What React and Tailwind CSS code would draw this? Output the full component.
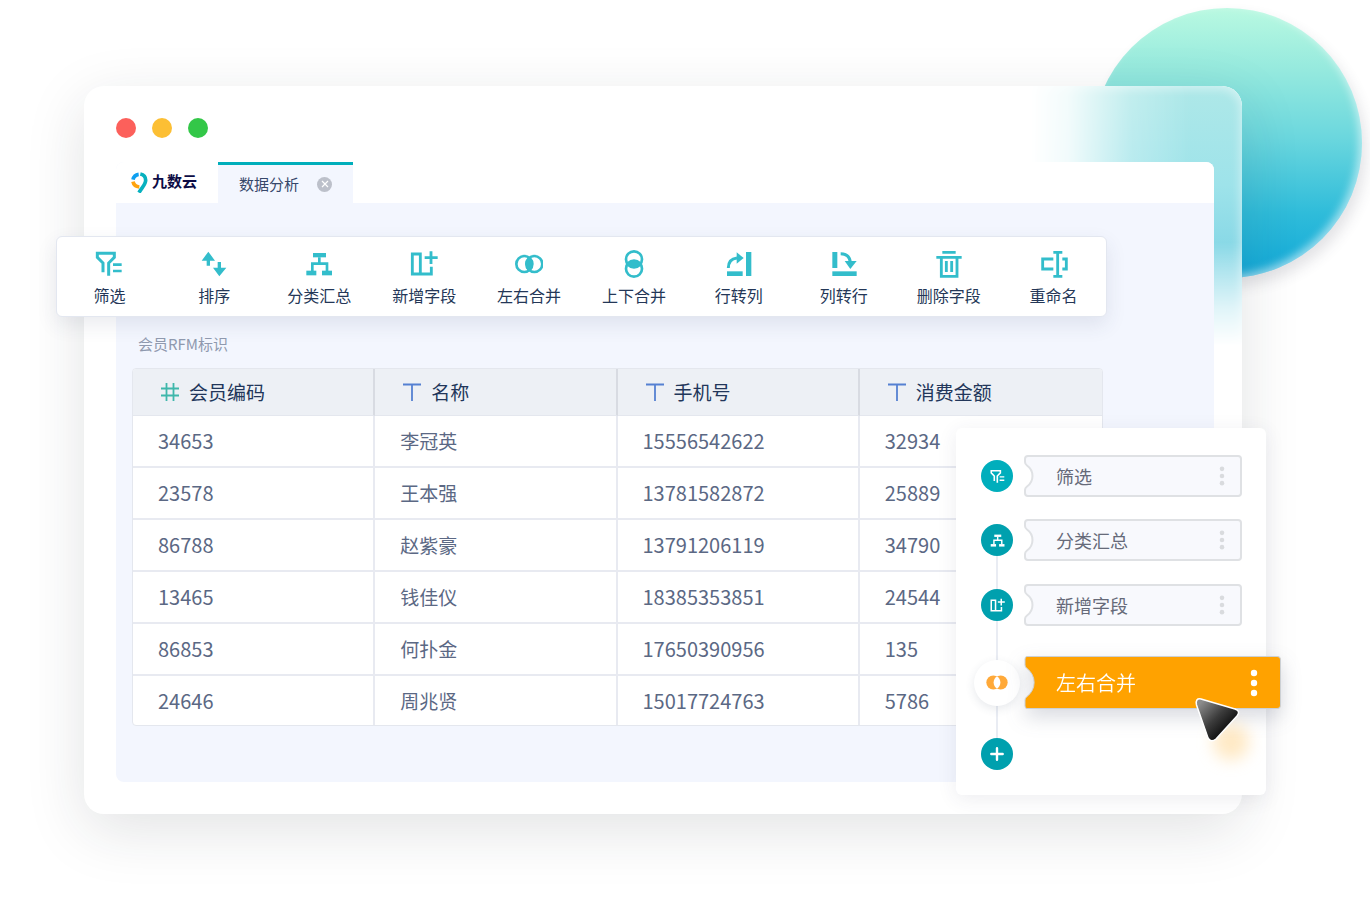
const ICONS = {
  filter: (
    <g fill="none" stroke="currentColor" strokeWidth="9">
      <path d="M24 67V39L7 22V10H58V22L41 39V77" />
      <path d="M54 44H80M54 63H80" strokeWidth="8" />
    </g>
  ),
  sort: (
    <g fill="currentColor">
      <path d="M25 5 45 32H30V47H20V32H5Z" />
      <path d="M53 36H63V53H79L58 79 39 53H53Z" />
    </g>
  ),
  group: (
    <g fill="currentColor">
      <rect x="24" y="9" width="39" height="13" />
      <rect x="4" y="62" width="30" height="14" />
      <rect x="51" y="62" width="30" height="14" />
      <path d="M43 22V40M22 63V41H66V63" fill="none" stroke="currentColor" strokeWidth="8" />
    </g>
  ),
  addField: (
    <g fill="none" stroke="currentColor" strokeWidth="8.5">
      <path d="M31 72V12H7V72H64V50" />
      <path d="M63 4V42M44 23H83" />
    </g>
  ),
  mergeX: (
    <g fill="none" stroke="currentColor" strokeWidth="8">
      <circle cx="28" cy="42" r="24" />
      <circle cx="58" cy="42" r="24" />
      <path d="M43 20A27 27 0 0 1 43 64A27 27 0 0 1 43 20Z" fill="currentColor" stroke="none" />
    </g>
  ),
  mergeY: (
    <g fill="none" stroke="currentColor" strokeWidth="8">
      <circle cx="42" cy="28" r="24" />
      <circle cx="42" cy="56" r="24" />
      <path d="M20 42A27 27 0 0 1 64 42A27 27 0 0 1 20 42Z" fill="currentColor" stroke="none" />
    </g>
  ),
  rowToCol: (
    <g fill="currentColor">
      <rect x="6" y="64" width="47" height="14" />
      <rect x="63" y="6" width="16" height="72" />
      <path d="M35 7 56 24 35 41Z" />
      <path d="M10 54C10 38 18 26 36 24" fill="none" stroke="currentColor" strokeWidth="9" />
    </g>
  ),
  colToRow: (
    <g fill="currentColor">
      <rect x="7" y="6" width="15" height="48" />
      <rect x="7" y="64" width="73" height="14" />
      <path d="M44 33H80L61 57Z" />
      <path d="M32 11C50 11 59 20 61 36" fill="none" stroke="currentColor" strokeWidth="9" />
    </g>
  ),
  remove: (
    <g fill="none" stroke="currentColor" strokeWidth="8.5">
      <path d="M22 7H62M4 22H80" />
      <path d="M19 22V79H66V22" />
      <path d="M34 33V66M50 33V66" />
    </g>
  ),
  rename: (
    <g fill="none" stroke="currentColor" strokeWidth="8.500">
      <path d="M40 7H67M40 79H67M53 7V79" />
      <path d="M40 27H8V57H40M67 27H79V57H67" />
    </g>
  ),
};

const TOOLS = [
  { icon: 'filter', label: '筛选' },
  { icon: 'sort', label: '排序' },
  { icon: 'group', label: '分类汇总' },
  { icon: 'addField', label: '新增字段' },
  { icon: 'mergeX', label: '左右合并' },
  { icon: 'mergeY', label: '上下合并' },
  { icon: 'rowToCol', label: '行转列' },
  { icon: 'colToRow', label: '列转行' },
  { icon: 'remove', label: '删除字段' },
  { icon: 'rename', label: '重命名' },
];

const COLUMNS = [
  { type: 'number', label: '会员编码' },
  { type: 'text', label: '名称' },
  { type: 'text', label: '手机号' },
  { type: 'text', label: '消费金额' },
];

const ROWS = [
  ['34653', '李冠英', '15556542622', '32934'],
  ['23578', '王本强', '13781582872', '25889'],
  ['86788', '赵紫豪', '13791206119', '34790'],
  ['13465', '钱佳仪', '18385353851', '24544'],
  ['86853', '何扑金', '17650390956', '135'],
  ['24646', '周兆贤', '15017724763', '5786'],
];

const STEPS = [
  { icon: 'filter', label: '筛选', badge: 'bg-[#00aebc]' },
  { icon: 'group', label: '分类汇总', badge: 'bg-[#00a0ae]' },
  { icon: 'addField', label: '新增字段', badge: 'bg-[#00a0ae]' },
];

function Icon({ name, className }) {
  return (
    <svg viewBox="0 0 84 84" className={className} aria-hidden="true">
      {ICONS[name]}
    </svg>
  );
}

function Logo() {
  return (
    <a href="#" className="flex w-[102px] items-center gap-1 pl-[15px] text-[#0c0c45]">
      <svg viewBox="0 0 51 63" className="h-[21px] w-[17px]" fill="none" strokeWidth="11" aria-hidden="true">
        <path d="M6 23C8 14 14 8 23 7" stroke="#0e9ff0" />
        <path d="M6 29C8 39 15 44 25 45" stroke="#ffa30d" />
        <path d="M28 6C38 8 44 15 44 25C44 38 32 47 24 62" stroke="#07b1bf" />
      </svg>
      <span className="pb-1 text-[15px] leading-5 font-bold">九数云</span>
    </a>
  );
}

function TabBar() {
  return (
    <div className="flex h-[41px] rounded-t-lg bg-white">
      <Logo />
      <div className="flex w-[135px] items-center border-t-[3px] border-[#00aebb] bg-[#f3f6fe] pl-[21px]">
        <span className="text-[15px] leading-6 text-[#36476a]">数据分析</span>
        <button
          type="button"
          aria-label="关闭"
          className="ml-[18px] flex size-[15px] items-center justify-center rounded-full bg-[#bcc0ca] text-white"
        >
          <svg viewBox="0 0 8 8" className="size-2" stroke="currentColor" strokeWidth="1.2" aria-hidden="true">
            <path d="m1 1 6 6M7 1 1 7" />
          </svg>
        </button>
      </div>
    </div>
  );
}

function Toolbar() {
  return (
    <div className="-ml-[60px] mr-[107px] mt-[33px] grid grid-cols-10 rounded-md border border-[#e3e7f0] bg-white shadow-[0_8px_20px_rgba(50,60,100,0.10)]">
      {TOOLS.map(({ icon, label }) => (
        <button key={icon} type="button" className="flex flex-col items-center gap-[5px] pt-[13px] pb-[9px]">
          <Icon name={icon} className="size-7 text-[#33bdcb]" />
          <span className="text-base leading-6 whitespace-nowrap text-[#243757]">{label}</span>
        </button>
      ))}
    </div>
  );
}

function TypeIcon({ type }) {
  if (type === 'number') {
    return (
      <svg viewBox="0 0 18 18" className="size-[18px] text-[#3fb7ab]" stroke="currentColor" strokeWidth="1.8" aria-hidden="true">
        <path d="M5.5 0V18M12.5 0V18M0 5.5H18M0 12.5H18" />
      </svg>
    );
  }
  return (
    <svg viewBox="0 0 18 18" className="size-[18px] text-[#5580d2]" stroke="currentColor" strokeWidth="1.8" aria-hidden="true">
      <path d="M0 1.5H18M9 1.5V18" />
    </svg>
  );
}

function MemberTable() {
  return (
    <div className="mt-3 mr-[111px] ml-4 overflow-hidden rounded-sm border border-[#e4e7ee] bg-white">
      <table className="h-[356px] w-full table-fixed border-separate border-spacing-0 text-left">
        <thead>
          <tr className="h-[47px] bg-[#edf0f5]">
            {COLUMNS.map(({ type, label }) => (
              <th
                key={label}
                className="border-r-2 border-[#d8dbe2] border-b border-b-[#e4e7ee] pl-7 font-normal last:border-r-0"
              >
                <span className="flex items-center gap-2.5">
                  <TypeIcon type={type} />
                  <span className="text-[19px] leading-7 text-[#22365a]">{label}</span>
                </span>
              </th>
            ))}
          </tr>
        </thead>
        <tbody>
          {ROWS.map((row, index) => (
            <tr key={row[0]}>
              {row.map((value, col) => (
                <td
                  key={COLUMNS[col].label}
                  className={`border-[#e8eaf1] pl-[25px] leading-7 text-[#5b6884] not-last:border-r-2 ${
                    index < ROWS.length - 1 ? 'border-b-2' : ''
                  } ${col === 1 ? 'text-[19px]' : 'text-xl'}`}
                >
                  {value}
                </td>
              ))}
            </tr>
          ))}
        </tbody>
      </table>
    </div>
  );
}

function Dots({ className }) {
  return (
    <svg viewBox="0 0 8 28" className={className} fill="currentColor" aria-hidden="true">
      <circle cx="4" cy="4" r="3.2" />
      <circle cx="4" cy="14" r="3.2" />
      <circle cx="4" cy="24" r="3.2" />
    </svg>
  );
}

function StepCard({ label }) {
  return (
    <button type="button" className="ml-1 flex h-[42px] flex-1 text-left">
      <svg viewBox="0 0 12 42" className="h-[42px] w-3" aria-hidden="true">
        <path
          d="M12 1H4Q1 1 1 4V7Q1 9 3 10.5A12.8 12.8 0 0 1 3 31.5Q1 33 1 35V38Q1 41 4 41H12"
          fill="#f8f9fd"
          stroke="#dfe1e4"
          strokeWidth="2"
        />
      </svg>
      <span className="flex h-full flex-1 items-center justify-between rounded-r-sm border-y-2 border-r-2 border-[#dfe1e4] bg-[#f8f9fd] pr-[15px] pl-5">
        <span className="text-lg leading-6 text-[#666a79]">{label}</span>
        <Dots className="h-5 w-1.5 text-[#d9dbde]" />
      </span>
    </button>
  );
}

function ActiveStep() {
  return (
    <li className="-mr-[39px] mt-[30px] flex items-center">
      <span className="flex size-[46px] items-center justify-center rounded-full bg-white shadow-[0_3px_10px_rgba(60,70,100,0.12)]">
        <svg viewBox="0 0 66 44" className="h-[15px] w-[22px]" aria-hidden="true">
          <circle cx="22" cy="22" r="21" fill="#ffa939" />
          <circle cx="44" cy="22" r="21" fill="#ffa939" />
          <path d="M33 4A21 21 0 0 1 33 40A21 21 0 0 1 33 4Z" fill="#fff" />
        </svg>
      </span>
      <button
        type="button"
        className="ml-1 flex h-[53px] flex-1 text-left drop-shadow-[0_8px_10px_rgba(60,70,100,0.2)]"
      >
        <svg viewBox="0 0 12 53" className="h-[53px] w-3" aria-hidden="true">
          <path
            d="M12 .5H3Q1 .5 1 3V9Q1 11 3 12.5A17.3 17.3 0 0 1 3 40.5Q1 42 1 44V50Q1 52.5 3 52.5H12"
            fill="#ffa200"
            stroke="#ccd0d4"
          />
        </svg>
        <span className="flex h-full flex-1 items-center justify-between rounded-r-sm border-y border-r border-[#ccd0d4] bg-[#ffa200] pr-[22px] pl-5">
          <span className="text-xl leading-7 font-[350] text-white">左右合并</span>
          <Dots className="h-7 w-2 text-white" />
        </span>
      </button>
    </li>
  );
}

function Pointer() {
  return (
    <div className="pointer-events-none absolute right-[23px] bottom-[23px] h-[76px] w-[50px]">
      <div className="absolute top-7 left-5 size-9 rounded-full bg-[#ffc76b]/40 blur-[8px]" />
      <svg viewBox="0 0 50 50" className="absolute top-0 left-0 size-[50px]" aria-hidden="true">
        <defs>
          <linearGradient id="pointer" x1="0.1" y1="0.1" x2="0.75" y2="0.75">
            <stop offset="0" stopColor="#8c8c8c" />
            <stop offset="0.55" stopColor="#3c3c3c" />
            <stop offset="1" stopColor="#0c0c0c" />
          </linearGradient>
        </defs>
        <path
          d="M8 3 42 13Q48 15 44 20L23 43Q18 47 15 42L3.5 9Q2 2 8 3Z"
          fill="url(#pointer)"
          stroke="#fff"
          strokeWidth="1.5"
        />
      </svg>
    </div>
  );
}

function FlowPanel() {
  return (
    <aside className="absolute -right-6 bottom-[19px] w-[310px] rounded-md bg-white pt-[27px] pr-6 pb-[25px] pl-[18px] shadow-[0_4px_20px_rgba(50,60,90,0.09)]">
      <div className="absolute top-[128px] bottom-[57px] left-10 w-0.5 bg-[#e9ecf3]" />
      <ol className="relative">
        {STEPS.map(({ icon, label, badge }) => (
          <li key={icon} className="mt-[22px] flex items-center first:mt-0 last-of-type:mt-0 nth-3:mt-[23px]">
            <span className="flex w-[46px] justify-center">
              <span className={`flex size-8 items-center justify-center rounded-full text-white ${badge}`}>
                <Icon name={icon} className="size-[15px]" />
              </span>
            </span>
            <StepCard label={label} />
          </li>
        ))}
        <ActiveStep />
        <li className="mt-[29px]">
          <button
            type="button"
            aria-label="添加"
            className="ml-[7px] flex size-8 items-center justify-center rounded-full bg-[#00a0ae] text-white"
          >
            <svg viewBox="0 0 14 14" className="size-3.5" stroke="currentColor" strokeWidth="2.4" strokeLinecap="round" aria-hidden="true">
              <path d="M7 1.3V12.7M1.3 7H12.7" />
            </svg>
          </button>
        </li>
      </ol>
      <Pointer />
    </aside>
  );
}

export default function App() {
  return (
    <main className="relative min-h-screen overflow-hidden bg-white py-[86px] pr-32 pl-[84px] font-['Noto_Sans_CJK_SC',sans-serif]">
      <div className="absolute top-2 right-2 size-[270px] rounded-full bg-[linear-gradient(180deg,#b9f9e1_0%,#97eade_22%,#6bd7de_48%,#2fbcda_76%,#11a8d8_100%)] shadow-[inset_-3px_-3px_8px_rgba(255,255,255,0.55),4px_8px_14px_rgba(60,60,80,0.14)]" />

      <section className="relative rounded-[20px] bg-white pt-8 pr-7 pb-8 pl-8 shadow-[0_16px_60px_rgba(30,35,50,0.13)]">
        {/* frosted corner in front of the circle */}
        <div className="absolute top-0 right-0 h-[260px] w-[212px] rounded-tr-[20px] bg-[linear-gradient(180deg,#aee8e8_0%,#9ee3ea_38%,#88d8e6_62%,#9adcea_100%)] shadow-[inset_-2px_3px_10px_rgba(255,255,255,0.45)] [mask-composite:intersect] [mask-image:linear-gradient(to_right,transparent,rgba(0,0,0,0.15)_18%,rgba(0,0,0,0.75)_48%,black_75%),linear-gradient(to_bottom,black_60%,rgba(0,0,0,0.3)_85%,transparent)]" />

        <div className="relative flex gap-4">
          <span className="size-5 rounded-full bg-[#fc605b]" />
          <span className="size-5 rounded-full bg-[#fcbf34]" />
          <span className="size-5 rounded-full bg-[#33c748]" />
        </div>

        <div className="relative mt-6 rounded-lg bg-[#f3f6fe] pb-14">
          <TabBar />
          <Toolbar />
          <h2 className="mt-[15px] ml-[22px] text-[15px] leading-6 text-[#8f99ae]">会员RFM标识</h2>
          <MemberTable />
        </div>

        <FlowPanel />
      </section>
    </main>
  );
}
